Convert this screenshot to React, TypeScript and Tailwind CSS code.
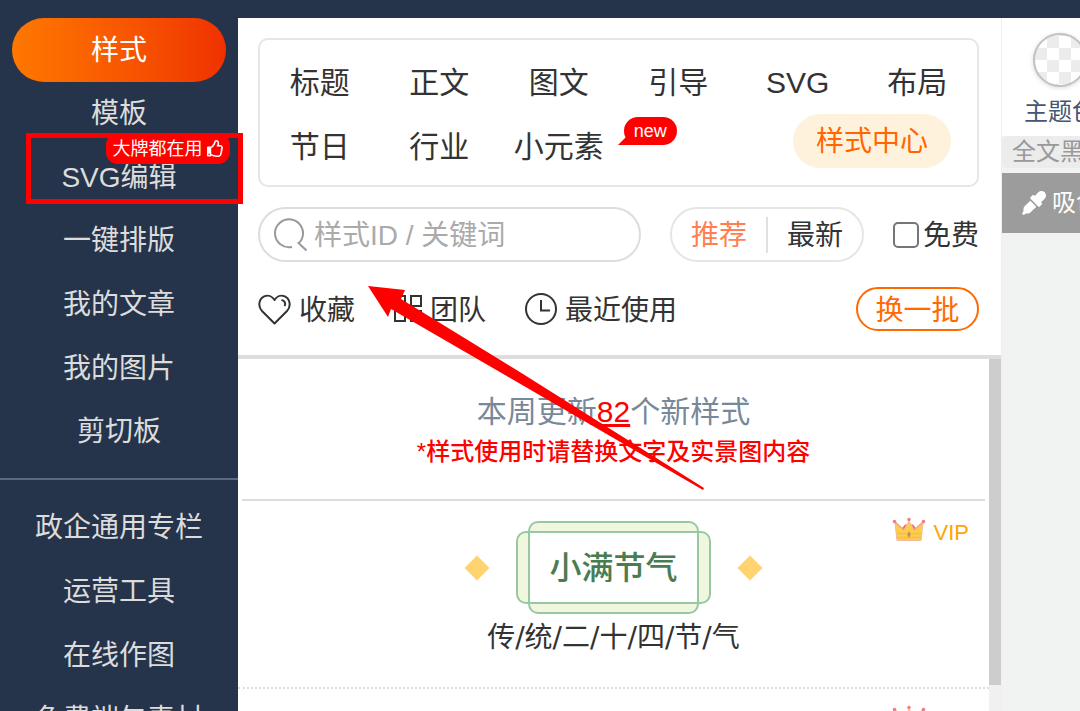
import { FaRegThumbsUp, FaEyeDropper } from 'react-icons/fa';

const mainMenu = ['样式', '模板', 'SVG编辑', '一键排版', '我的文章', '我的图片', '剪切板'];
const moreMenu = ['政企通用专栏', '运营工具', '在线作图', '免费端午素材'];
const categories = ['标题', '正文', '图文', '引导', 'SVG', '布局', '节日', '行业', '小元素'];

function SearchIcon() {
  return (
    <svg width="34" height="34" viewBox="0 0 34 34" fill="none" stroke="#999" strokeWidth="2" className="shrink-0">
      <path d="M18 29A14 14 0 1 1 28 20.500Q27 23.500 24.500 25L32.500 32.500" />
    </svg>
  );
}

function HeartIcon() {
  return (
    <svg width="33" height="31" viewBox="0 0 33 31" fill="none" stroke="#333" strokeWidth="2" strokeLinejoin="round">
      <path d="M16.5 29.5L4 17C-0.5 12.2 1 4.8 6.2 2.4C10.2 0.6 14.2 2.2 16.5 6C18.8 2.2 22.8 0.6 26.8 2.4C32 4.8 33.5 12.2 29 17Z" />
      <path d="M23.5 6C26.8 6.6 28 9.2 26.6 12.2" />
    </svg>
  );
}

function TeamIcon() {
  return (
    <svg width="28" height="30" viewBox="0 0 28 30" fill="none" stroke="#333" strokeWidth="2">
      <path d="M1 2h10v10H1zM17 2h10v10H17zM1 17h10v10H1zM17 17h10v10H17z" />
    </svg>
  );
}

function ClockIcon() {
  return (
    <svg width="32" height="32" viewBox="0 0 32 32" fill="none" stroke="#333" strokeWidth="2">
      <circle cx="16" cy="16" r="15" />
      <path d="M16 7v10.500h9" />
    </svg>
  );
}

function CrownIcon() {
  return (
    <svg width="34" height="26" viewBox="0 0 34 26">
      <path d="M7 15L13 7.500H21L27 15Z" fill="#ee6c78" />
      <path
        d="M5 23.500L3 6L12 13L17 4L22 13L31 6L29 23.500Z"
        fill="#fcd045"
        stroke="#f6b9a0"
        strokeWidth="1"
      />
      <path d="M3 5L12 13M31 5L22 13" stroke="#f2a08c" strokeWidth="1.500" />
      <path d="M4.500 16.500H29.500M5 20.500H29" stroke="#f3bb62" strokeWidth="1.500" />
      <path d="M17 14l1.800 3.500L17 21l-1.800-3.500z" fill="#c98a62" />
      <circle cx="2.500" cy="4.500" r="1.800" fill="#ee7f8a" />
      <circle cx="17" cy="2.500" r="1.800" fill="#ee7f8a" />
      <circle cx="31.500" cy="4.500" r="1.800" fill="#ee7f8a" />
    </svg>
  );
}

function Diamond() {
  return (
    <svg width="26" height="26" viewBox="0 0 26 26">
      <path d="M13 0.500L25.500 13L13 25.500L0.500 13Z" fill="#ffd470" />
    </svg>
  );
}

function VipTag() {
  return (
    <div className="absolute right-5 top-4 flex items-start gap-2">
      <CrownIcon />
      <span className="text-[22px] leading-8 text-[#ffa500]">VIP</span>
    </div>
  );
}

function Sidebar() {
  return (
    <nav className="relative z-10 w-[238px] shrink-0 text-[28px] leading-8 text-[#dcdcdc]">
      <div className="grid h-[445px] grid-rows-7">
        {mainMenu.map((item, idx) => (
          <div key={item} className="relative flex px-3">
            <button
              className={
                idx === 0
                  ? 'flex-1 rounded-full bg-linear-to-r from-[#ff7700] to-[#f03000] pt-[2px] text-white'
                  : 'flex-1 pt-[2px]'
              }
            >
              {item}
            </button>
            {item === 'SVG编辑' && (
              <>
                <div className="absolute -right-[5px] bottom-[5px] left-[26px] h-[71px] border-[5px] border-[#ff0000]" />
                <span className="absolute -top-3 right-2 flex h-[31px] w-[124px] items-center justify-center gap-1 rounded-xl bg-[#ff0000] text-lg text-white">
                  大牌都在用
                  <FaRegThumbsUp size={17} />
                </span>
              </>
            )}
          </div>
        ))}
      </div>
      <div className="my-[15px] h-[2px] bg-[#5a6b80]" />
      <div className="grid h-64 grid-rows-4">
        {moreMenu.map((item) => (
          <button key={item} className="pt-[2px]">
            {item}
          </button>
        ))}
      </div>
    </nav>
  );
}

function CategoryBox() {
  return (
    <div className="grid auto-rows-[64px] grid-cols-6 rounded-[10px] border-2 border-[#e6e6e6] pb-[7px] pt-[10px] text-3xl">
      {categories.map((item) => (
        <div key={item} className="flex items-center justify-center">
          <button className="relative whitespace-nowrap pt-[2px]">
            {item}
            {item === '小元素' && (
              <span className="absolute -right-[73px] -top-[10px] flex h-7 w-[53px] items-center justify-center rounded-[14px] bg-[#ff0000] text-lg text-white">
                <svg className="absolute -left-[6px] bottom-0" width="20" height="12" viewBox="0 0 20 12">
                  <path d="M0 12L8 4L20 12Z" fill="#ff0000" />
                </svg>
                <span className="relative">new</span>
              </span>
            )}
          </button>
        </div>
      ))}
      <div className="col-span-3 flex items-start justify-end pr-[26px]">
        <button className="h-[54px] w-[158px] rounded-full bg-[#fff2dc] pt-[2px] text-[28px] text-[#ff6600]">
          样式中心
        </button>
      </div>
    </div>
  );
}

function Toolbar() {
  return (
    <header className="border-b-4 border-[#dddddd] pb-6 pl-5 pr-[22px] pt-5">
      <CategoryBox />
      <div className="mt-5 flex h-[55px] items-stretch gap-[29px]">
        <label className="flex min-w-0 flex-1 items-center gap-[6px] rounded-full border-2 border-[#dddddd] pl-[14px] pr-5">
          <SearchIcon />
          <input
            type="text"
            aria-label="搜索样式"
            placeholder="样式ID / 关键词"
            className="w-full min-w-0 pt-[2px] outline-none placeholder:text-[#aaaaaa]"
          />
        </label>
        <div className="flex w-[194px] items-center rounded-full border-2 border-[#e6e6e6]">
          <button className="flex-1 pt-[3px] text-[#ff7f50]">推荐</button>
          <div className="h-9 w-[2px] bg-[#e0e0e0]" />
          <button className="flex-1 pt-[3px]">最新</button>
        </div>
        <label className="flex items-center gap-1 whitespace-nowrap">
          <input type="checkbox" className="h-[26px] w-[26px] appearance-none rounded-[5px] border-2 border-[#767676]" />
          <span className="pt-[2px]">免费</span>
        </label>
      </div>
      <div className="mt-[25px] flex h-11 items-center gap-[39px]">
        <button className="flex items-center gap-2">
          <HeartIcon />
          <span className="pt-[3px]">收藏</span>
        </button>
        <button className="flex items-center gap-2">
          <TeamIcon />
          <span className="pt-[3px]">团队</span>
        </button>
        <button className="flex items-center gap-2">
          <ClockIcon />
          <span className="pt-[3px]">最近使用</span>
        </button>
        <button className="ml-auto h-11 w-[123px] rounded-full border-2 border-[#ff6a00] pt-[3px] leading-9 text-[#ff6a00]">
          换一批
        </button>
      </div>
    </header>
  );
}

function StyleList() {
  return (
    <div className="flex min-h-0 flex-1 overflow-hidden">
      <div className="min-w-0 flex-1">
        <div className="mx-1 border-b-2 border-[#dddddd] pb-[27px] pt-[33px] text-center">
          <h2 className="text-3xl leading-10 text-[#778899]">
            本周更新
            <a href="#new" className="text-[#ff0000] underline decoration-[3px]">
              82
            </a>
            个新样式
          </h2>
          <p className="text-2xl leading-10 font-medium text-[#ff0000]">*样式使用时请替换文字及实景图内容</p>
        </div>

        <article className="relative border-b-2 border-dotted border-[#dddddd] pb-[29px] pt-5">
          <VipTag />
          <div className="flex items-center justify-center gap-[26px]">
            <Diamond />
            <div className="relative flex h-[93px] w-[195px] items-center justify-center">
              <svg
                className="absolute inset-0"
                width="195"
                height="93"
                viewBox="0 0 195 93"
                fill="#f1f6df"
                stroke="#98c8a2"
                strokeWidth="2"
              >
                <rect x="1" y="11" width="193" height="71" rx="9" />
                <rect x="13" y="1" width="169" height="91" rx="9" />
                <rect x="13" y="11" width="169" height="71" fill="#fff" />
              </svg>
              <h3 className="relative text-[32px] font-medium text-[#4a7c50]">小满节气</h3>
            </div>
            <Diamond />
          </div>
          <p className="mt-1 text-center font-['DejaVu_Sans','Noto_Sans_CJK_SC',sans-serif] leading-10">
            传/统/二/十/四/节/气
          </p>
        </article>

        <article className="relative h-48">
          <VipTag />
        </article>
      </div>
      <div className="w-3 bg-[#f0f0f0]">
        <div className="h-[326px] bg-[#cdcdcd]" />
      </div>
    </div>
  );
}

function ThemePanel() {
  return (
    <aside className="w-[79px] shrink-0 overflow-hidden border-l border-[#eeeeee] bg-[#f1f3f3] text-2xl">
      <div className="w-[116px]">
        <div className="flex h-[118px] flex-col items-center bg-white pt-[14px]">
          <svg width="56" height="56" viewBox="0 0 56 56" className="drop-shadow-sm">
            <defs>
              <pattern id="checker" width="24" height="24" patternUnits="userSpaceOnUse" x="3" y="4">
                <rect width="24" height="24" fill="#fff" />
                <rect x="12" width="12" height="12" fill="#ececec" />
                <rect y="12" width="12" height="12" fill="#ececec" />
              </pattern>
            </defs>
            <circle cx="28" cy="28" r="26" fill="url(#checker)" stroke="#c2c2c2" strokeWidth="2" />
          </svg>
          <button className="mt-2 leading-8 text-[#465573]">主题色</button>
        </div>
        <button className="block h-8 w-full rounded-md bg-[#ececec] leading-8 text-[#999999]">全文黑白</button>
        <button className="mt-[5px] flex h-[60px] w-full items-center gap-[6px] bg-[#9c9c9c] pl-5 text-white">
          <FaEyeDropper size={24} />
          吸色
        </button>
      </div>
    </aside>
  );
}

export default function App() {
  return (
    <div className="relative flex h-screen flex-col overflow-hidden bg-[#26344b] pt-[18px] font-['Liberation_Sans','Noto_Sans_CJK_SC',sans-serif] text-[#333333]">
      <div className="flex min-h-0 flex-1">
        <Sidebar />
        <main className="flex min-w-0 flex-1 flex-col bg-white text-[28px]">
          <Toolbar />
          <StyleList />
        </main>
        <ThemePanel />
      </div>

      {/* Guide arrow */}
      <svg className="absolute left-[368px] top-[286px] z-20" width="337" height="205" viewBox="368 286 337 205">
        <path d="M368 286L405 290L401 299L523 374L704 488L703 490L505 375L391 309L388 317Z" fill="#ff0000" />
      </svg>
    </div>
  );
}
